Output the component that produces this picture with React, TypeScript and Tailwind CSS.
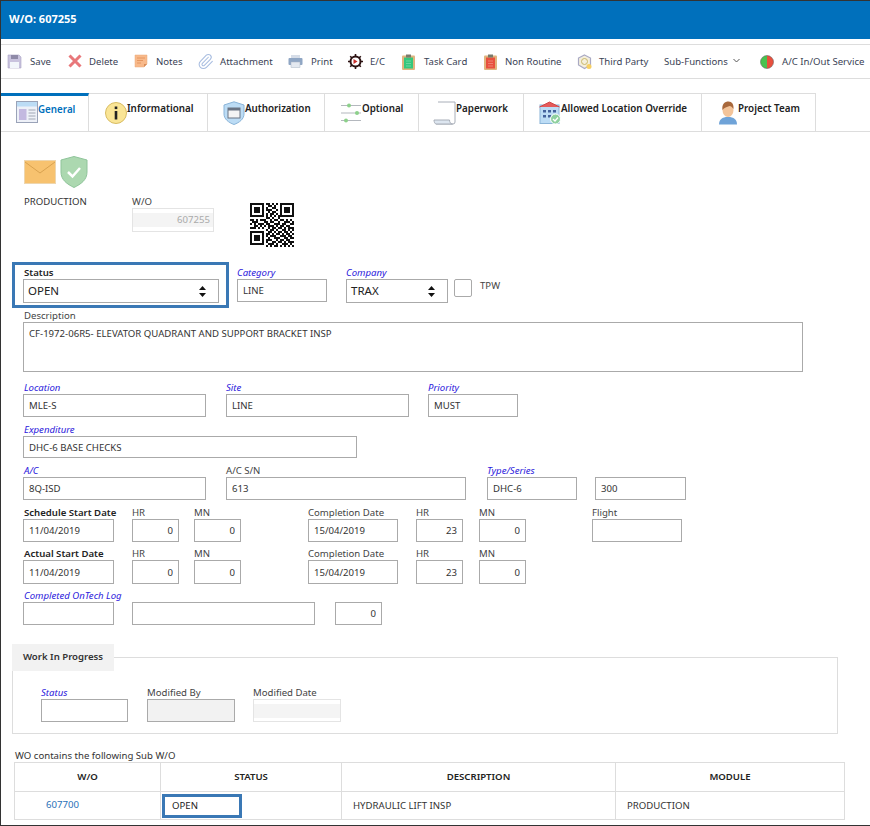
import { Paperclip } from "lucide-react";

const labelBase = "block h-[14px] text-[9.6px] leading-[16px] font-['Noto_Sans',sans-serif] whitespace-nowrap";
const inputBase = "block h-full w-full border border-[#aaa] bg-white px-[5px] text-[9.6px] text-[#333] outline-none font-['Noto_Sans',sans-serif]";

type FieldProps = {
    label?: string;
    value?: string;
    kind?: "plain" | "bold" | "link";
    right?: boolean;
    className: string;
    height?: string;
};

const Field = ({ label, value, kind = "plain", right, className, height = "h-[23px]" }: FieldProps) => {
    const tone =
        kind === "bold"
            ? "font-semibold text-[#222]"
            : kind === "link"
            ? "italic text-[#2b20dc]"
            : "text-[#444]";
    return (
        <div className={`shrink-0 ${className}`}>
            <span className={`${labelBase} ${tone}`}>{label}</span>
            <div className={height}>
                <input readOnly value={value ?? ""} className={`${inputBase} ${right ? "text-right" : ""}`} />
            </div>
        </div>
    );
};

const SelectBox = ({ value }: { value: string }) => (
    <div className="flex h-[24px] items-center justify-between border border-[#aaa] bg-white pl-[4px] pr-[11px] text-[11.5px] text-[#222]">
        <span>{value}</span>
        <svg width="9" height="13" viewBox="0 0 9 13">
            <path d="M4.5 1 8 5H1zM4.5 12 1 8h7z" fill="#111" />
        </svg>
    </div>
);

const DisabledInput = ({ value }: { value?: string }) => (
    <div className="flex h-full items-center border border-[#e4e4e4] bg-white">
        <div className="flex h-[14px] w-full items-center justify-end bg-[#f4f4f4] pr-[3px] text-[9.6px] text-[#aaa]">
            {value}
        </div>
    </div>
);

const Save = () => (
    <svg width="15" height="15" viewBox="0 0 15 15">
        <path d="M1 1h11l2 2v11H1z" fill="#c9c3de" stroke="#a9a3c4" strokeWidth="0.6" />
        <rect x="4" y="1" width="7" height="4" fill="#8f8aa8" />
        <rect x="3" y="8" width="9" height="6" fill="#f2f6fb" />
    </svg>
);
const Delete = () => (
    <svg width="14" height="14" viewBox="0 0 14 14">
        <path d="M1.500 1.500l11 11M12.500 1.500l-11 11" stroke="#e8777a" strokeWidth="3" />
    </svg>
);
const Notes = () => (
    <svg width="14" height="14" viewBox="0 0 14 14">
        <path d="M1 1h12v9l-3 3H1z" fill="#f8b98a" stroke="#e8a878" strokeWidth="0.5" />
        <path d="M3 4h8M3 6.500h6M3 9h4" stroke="#e08d55" strokeWidth="0.8" />
        <path d="M10 13v-3h3z" fill="#d98d5a" />
    </svg>
);
const Printer = () => (
    <svg width="15" height="14" viewBox="0 0 15 14">
        <rect x="3" y="1" width="9" height="4" fill="#d6dde8" />
        <rect x="0.500" y="4" width="14" height="7" rx="1" fill="#8fa6c4" />
        <rect x="3" y="8" width="9" height="5.500" fill="#e4e9f0" stroke="#a8b4c4" strokeWidth="0.5" />
    </svg>
);
const Gear = () => (
    <svg width="15" height="15" viewBox="0 0 15 15">
        <circle cx="7.500" cy="7.500" r="5" fill="none" stroke="#2b1111" strokeWidth="2" />
        <path d="M7.500 0v3M7.500 12v3M0 7.500h3M12 7.500h3M2.200 2.200l2 2M10.800 10.800l2 2M12.800 2.200l-2 2M4.200 10.800l-2 2" stroke="#2b1111" strokeWidth="1.600" />
        <path d="M5.500 5l4 2.500-4 2.500z" fill="#c9302c" />
    </svg>
);
const Board = ({ fill }: { fill: string }) => (
    <svg width="13" height="16" viewBox="0 0 13 16">
        <rect x="0" y="1.500" width="13" height="14.500" rx="1" fill="#e0b47e" />
        <rect x="2" y="3.500" width="9" height="11" fill={fill} />
        <rect x="4" y="0.500" width="5" height="3" fill="#7a7a6a" />
        <path d="M4 7h5M4 9.500h5M4 12h5" stroke="#ffffff" strokeOpacity="0.4" strokeWidth="0.7" />
    </svg>
);
const ThirdParty = () => (
    <svg width="16" height="16" viewBox="0 0 16 16" fill="none">
        <path d="M7.500 1l6 3v7l-6 3.500L1.500 11V4z" fill="#f4efdc" stroke="#a9a9c4" strokeWidth="1.200" />
        <circle cx="7.500" cy="7.500" r="3" stroke="#c9b76a" strokeWidth="1" />
        <circle cx="12" cy="12.500" r="2.500" fill="#f6cf63" />
    </svg>
);
const InOut = () => (
    <svg width="14" height="14" viewBox="0 0 14 14">
        <path d="M7 0.500a6.500 6.500 0 0 0 0 13z" fill="#49c24f" />
        <path d="M7 0.500a6.500 6.500 0 0 1 0 13z" fill="#e8503e" />
        <circle cx="7" cy="7" r="6.500" fill="none" stroke="#555" strokeWidth="0.500" />
    </svg>
);

const toolbar = [
    { icon: <Save />, text: "Save", box: "w-[61px]", iconBox: "w-[23px]" },
    { icon: <Delete />, text: "Delete", box: "w-[66px]", iconBox: "w-[21px]" },
    { icon: <Notes />, text: "Notes", box: "w-[63px]", iconBox: "w-[22px]" },
    { icon: <Paperclip size={17} strokeWidth={1.5} color="#a8bde0" />, text: "Attachment", box: "w-[91px]", iconBox: "w-[23px]" },
    { icon: <Printer />, text: "Print", box: "w-[60px]", iconBox: "w-[23px]" },
    { icon: <Gear />, text: "E/C", box: "w-[54px]", iconBox: "w-[22px]" },
    { icon: <Board fill="#35c77c" />, text: "Task Card", box: "w-[82px]", iconBox: "w-[22px]" },
    { icon: <Board fill="#e8503e" />, text: "Non Routine", box: "w-[93px]", iconBox: "w-[21px]" },
    { icon: <ThirdParty />, text: "Third Party", box: "w-[87px]", iconBox: "w-[22px]" },
];

const TabGeneral = () => (
    <svg width="22" height="22" viewBox="0 0 22 22">
        <rect x="0.500" y="0.500" width="21" height="21" fill="#eef1f8" stroke="#9aa3b8" />
        <rect x="1" y="1" width="20" height="4.500" fill="#bcdcf5" />
        <rect x="3" y="8" width="7.500" height="11" fill="#c3b9e0" />
        <path d="M12.500 9h7M12.500 12h7M12.500 15h7M12.500 18h7" stroke="#a0a6b4" />
    </svg>
);
const TabInfo = () => (
    <svg width="22" height="24" viewBox="0 0 22 24">
        <circle cx="11" cy="12" r="10.500" fill="#fae596" stroke="#d8bc62" />
        <rect x="9.700" y="5.500" width="2.600" height="2.600" fill="#222" />
        <rect x="9.700" y="10" width="2.600" height="8.500" fill="#222" />
    </svg>
);
const TabAuth = () => (
    <svg width="22" height="24" viewBox="0 0 22 24">
        <path d="M11 0.800 21 4v9c0 5-4.500 8.500-10 10.500C5.500 21.500 1 18 1 13V4z" fill="#bcdcf5" stroke="#8ab4d8" />
        <rect x="5" y="7" width="12" height="10" fill="#f4f4f4" stroke="#6a7484" />
        <rect x="5" y="7" width="12" height="2.500" fill="#6a7484" />
    </svg>
);
const TabOptional = () => (
    <svg width="22" height="20" viewBox="0 0 22 20">
        <path d="M1 2.500h20M1 10h20M1 17.500h20" stroke="#b4b8be" strokeWidth="1.200" />
        <circle cx="9" cy="2.500" r="2" fill="#8cd08a" />
        <circle cx="17" cy="10" r="2" fill="#8cd08a" />
        <circle cx="6" cy="17.500" r="2" fill="#8cd08a" />
    </svg>
);
const TabPaper = () => (
    <svg width="23" height="24" viewBox="0 0 23 24" fill="none">
        <path d="M5 1h17v20a2 2 0 0 1-2 2H3" fill="#ffffff" stroke="#a8aeb8" />
        <path d="M1 19h15.500c0 2 1 4 3 4H3c-1 0-2-2-2-4z" fill="#dde6f0" stroke="#a8aeb8" />
    </svg>
);
const TabBuilding = () => (
    <svg width="22" height="24" viewBox="0 0 22 24">
        <rect x="1" y="4" width="19" height="18.500" fill="#bcdcf5" stroke="#8ab4d8" />
        <path d="M0.500 6 10.500 1 20.500 6" fill="#e55b5b" stroke="#d04848" />
        <path d="M4 9h3v2.500H4zM9 9h3v2.500H9zM14 9h3v2.500h-3zM4 14h3v2.500H4zM9 14h3v2.500H9z" fill="#43629c" />
        <circle cx="16.500" cy="18" r="5" fill="#8fd0a0" stroke="#fff" />
        <path d="M14 18l2 2 3-3.500" stroke="#fff" strokeWidth="1.300" fill="none" />
    </svg>
);
const TabPerson = () => (
    <svg width="20" height="24" viewBox="0 0 20 24">
        <path d="M1 23.500c0-5 3-7.500 9-7.500s9 2.500 9 7.500z" fill="#6fa3d8" />
        <ellipse cx="10" cy="9" rx="5.500" ry="7" fill="#f3c49a" />
        <path d="M4.500 9C3.500 3 7 0.500 10.500 0.500S16 3.500 15.500 8C14 6 13 5 11.500 5 9 6 6 6.500 4.500 9z" fill="#a8683c" />
    </svg>
);

const tabs = [
    { icon: <TabGeneral />, text: "General", box: "w-[88px] pl-[15px] pb-[3px]", textBox: "mb-[3px]" },
    { icon: <TabInfo />, text: "Informational", box: "w-[119px] pl-[16px]", textBox: "mb-[6px]" },
    { icon: <TabAuth />, text: "Authorization", box: "w-[117px] pl-[15px]", textBox: "mb-[6px]" },
    { icon: <TabOptional />, text: "Optional", box: "w-[94px] pl-[15px]", textBox: "mb-[6px]" },
    { icon: <TabPaper />, text: "Paperwork", box: "w-[105px] pl-[14px]", textBox: "mb-[6px]" },
    { icon: <TabBuilding />, text: "Allowed Location Override", box: "w-[178px] pl-[15px]", textBox: "mb-[6px]" },
    { icon: <TabPerson />, text: "Project Team", box: "w-[114px] pl-[16px]", textBox: "mb-[6px]" },
];

const QR_ROWS = [
    "1111111011010101111111",
    "1000001001101001000001",
    "1011101010011001011101",
    "1011101011100101011101",
    "1011101001011001011101",
    "1000001010110101000001",
    "1111111010101011111111",
    "0000000011010010000000",
    "1101011100101101101010",
    "0111000110110010011101",
    "1010111011001110110011",
    "0011010101110101101100",
    "1110101001011011010111",
    "0000000010110100110101",
    "1111111001101011011010",
    "1000001011010110101101",
    "1011101010111001110110",
    "1011101001001110011011",
    "1011101011100101101100",
    "1000001010011011010111",
    "1111111001110100111010",
    "0000000010101101010101",
];

const QrCode = () => (
    <svg width="44" height="44" viewBox="0 0 22 22" shapeRendering="crispEdges">
        {QR_ROWS.map((row, y) =>
            row.split("").map((c, x) => (c === "1" ? <rect key={`${x}-${y}`} x={x} y={y} width="1" height="1" fill="#111" /> : null))
        )}
    </svg>
);

const App = () => {
    return (
        <div className="h-[826px] w-[870px] overflow-hidden border-b border-l border-t border-[#333] bg-white font-['Noto_Sans',sans-serif] text-[9.6px] text-[#333]">
            {/* TITLE */}
            <div className="flex h-[38px] items-center bg-[#0070bc] pb-[2px] pl-[8px] text-[11px] font-bold text-white">
                W/O: 607255
            </div>

            {/* TOOLBAR */}
            <div className="mt-[5px] flex h-[35px] items-center border-y border-[#ddd] pl-[6px] text-[9.6px] text-[#3a3f55]">
                {toolbar.map((item) => (
                    <div key={item.text} className={`flex shrink-0 items-center whitespace-nowrap ${item.box}`}>
                        <span className={`flex items-center ${item.iconBox}`}>{item.icon}</span>
                        <span className="mt-px">{item.text}</span>
                    </div>
                ))}
                <span className="mt-px flex w-[96px] shrink-0 items-center whitespace-nowrap">
                    Sub-Functions
                    <svg className="mb-[3px] ml-[5px]" width="7" height="5" viewBox="0 0 7 5" fill="none">
                        <path d="M0.500 1 3.500 4 6.500 1" stroke="#555" />
                    </svg>
                </span>
                <span className="flex w-[22px] shrink-0 items-center">
                    <InOut />
                </span>
                <span className="mt-px whitespace-nowrap">A/C In/Out Service</span>
            </div>

            {/* TABS */}
            <div className="mt-[14px] flex h-[39px] border-b border-[#ddd]">
                {tabs.map((tab, i) => (
                    <div
                        key={tab.text}
                        className={`relative flex shrink-0 items-center border-r border-t border-[#ddd] text-[9.8px] font-semibold whitespace-nowrap ${tab.box} ${
                            i === 0 ? "border-t-[3px] border-t-[#0070bc] text-[#0070bc]" : "text-[#222]"
                        }`}
                    >
                        {tab.icon}
                        <span className={tab.textBox}>{tab.text}</span>
                    </div>
                ))}
            </div>

            {/* GENERAL FORM */}
            <div className="pl-[22px]">
                <div className="ml-px mt-[24px] flex items-center gap-[4px]">
                    <svg width="32" height="24" viewBox="0 0 32 24">
                        <rect x="0.500" y="0.500" width="31" height="23" fill="#f7c26f" stroke="#eed6ae" />
                        <path d="M1 2l15 11L31 2" fill="none" stroke="#d9a24f" />
                    </svg>
                    <svg width="28" height="32" viewBox="0 0 28 32">
                        <path d="M14 0.500 27 4v12c0 8-6 12-13 15.500C7 28 1 24 1 16V4z" fill="#acd8b0" stroke="#8fc49a" />
                        <path d="M8 16l4.500 4.500L20 12" fill="none" stroke="#fff" strokeWidth="2.500" />
                    </svg>
                </div>

                <div className="mt-[6px] flex h-[53px]">
                    <span className="w-[109px] pl-px leading-[16px] text-[#333]">PRODUCTION</span>
                    <div className="w-[82px] shrink-0">
                        <span className={`${labelBase} text-[#444]`}>W/O</span>
                        <div className="h-[24px]">
                            <DisabledInput value="607255" />
                        </div>
                    </div>
                    <div className="ml-[36px] mt-[9px]">
                        <QrCode />
                    </div>
                </div>

                {/* STATUS ROW */}
                <div className="mt-[15px] flex items-start">
                    <div className="-ml-[11px] h-[46px] w-[217px] shrink-0 border-[3px] border-[#3a78b5] pl-[8px] pr-[7px]">
                        <span className={`${labelBase} pl-px font-semibold text-[#222]`}>Status</span>
                        <SelectBox value="OPEN" />
                    </div>
                    <Field label="Category" value="LINE" kind="link" className="ml-[8px] mt-[3px] w-[90px]" />
                    <div className="ml-[19px] mt-[3px] w-[102px] shrink-0">
                        <span className={`${labelBase} italic text-[#2b20dc]`}>Company</span>
                        <SelectBox value="TRAX" />
                    </div>
                    <div className="ml-[6px] mt-[17px] h-[18px] w-[18px] shrink-0 rounded-[2px] border border-[#aaa]" />
                    <span className="ml-[8px] mt-[17px] text-[#444]">TPW</span>
                </div>

                <Field
                    label="Description"
                    value="CF-1972-06R5- ELEVATOR QUADRANT AND SUPPORT BRACKET INSP"
                    className="w-[780px] [&_input]:pb-[28px] [&>span]:pl-px"
                    height="h-[50px]"
                />

                <div className="mt-[8px] flex">
                    <Field label="Location" value="MLE-S" kind="link" className="w-[183px] [&>span]:pl-px" />
                    <Field label="Site" value="LINE" kind="link" className="ml-[20px] w-[183px]" />
                    <Field label="Priority" value="MUST" kind="link" className="ml-[19px] w-[90px]" />
                </div>

                <Field label="Expenditure" value="DHC-6 BASE CHECKS" kind="link" className="mt-[5px] w-[334px] [&>span]:pl-px" height="h-[22px]" />

                <div className="mt-[5px] flex">
                    <Field label="A/C" value="8Q-ISD" kind="link" className="w-[183px] [&>span]:pl-px" />
                    <Field label="A/C S/N" value="613" className="ml-[20px] w-[240px]" />
                    <Field label="Type/Series" value="DHC-6" kind="link" className="ml-[21px] w-[90px]" />
                    <Field value="300" className="ml-[18px] w-[91px]" />
                </div>

                <div className="mt-[5px] flex">
                    <Field label="Schedule Start Date" value="11/04/2019" kind="bold" className="w-[91px] [&>span]:pl-px" />
                    <Field label="HR" value="0" right className="ml-[18px] w-[47px]" />
                    <Field label="MN" value="0" right className="ml-[15px] w-[47px]" />
                    <Field label="Completion Date" value="15/04/2019" className="ml-[67px] w-[90px]" />
                    <Field label="HR" value="23" right className="ml-[18px] w-[47px]" />
                    <Field label="MN" value="0" right className="ml-[16px] w-[47px]" />
                    <Field label="Flight" className="ml-[66px] w-[90px]" />
                </div>

                <div className="mt-[4px] flex">
                    <Field label="Actual Start Date" value="11/04/2019" kind="bold" className="w-[91px] [&>span]:pl-px" height="h-[24px]" />
                    <Field label="HR" value="0" right className="ml-[18px] w-[47px]" height="h-[24px]" />
                    <Field label="MN" value="0" right className="ml-[15px] w-[47px]" height="h-[24px]" />
                    <Field label="Completion Date" value="15/04/2019" className="ml-[67px] w-[90px]" height="h-[24px]" />
                    <Field label="HR" value="23" right className="ml-[18px] w-[47px]" height="h-[24px]" />
                    <Field label="MN" value="0" right className="ml-[16px] w-[47px]" height="h-[24px]" />
                </div>

                <div className="mt-[4px] flex">
                    <Field label="Completed OnTech Log" kind="link" className="w-[91px] [&>span]:pl-px" />
                    <Field className="ml-[18px] w-[183px]" />
                    <Field value="0" right className="ml-[20px] w-[47px]" />
                </div>
            </div>

            {/* WORK IN PROGRESS */}
            <div className="relative ml-[11px] mt-[32px] h-[77px] w-[826px] border border-[#ddd]">
                <div className="absolute -left-px -top-[14px] flex h-[27px] w-[102px] items-center justify-center bg-[#f2f2f2] text-[9.6px] font-semibold text-[#333]">
                    Work In Progress
                </div>
                <div className="mt-[27px] flex pl-[28px]">
                    <Field label="Status" kind="link" className="w-[87px]" />
                    <div className="ml-[19px] w-[88px] shrink-0">
                        <span className={`${labelBase} text-[#444]`}>Modified By</span>
                        <div className="h-[23px] border border-[#aaa] bg-[#f2f2f2]" />
                    </div>
                    <div className="ml-[18px] w-[88px] shrink-0">
                        <span className={`${labelBase} text-[#444]`}>Modified Date</span>
                        <div className="h-[23px]">
                            <DisabledInput />
                        </div>
                    </div>
                </div>
            </div>

            {/* SUB W/O */}
            <p className="ml-[14px] mt-[14px] h-[14px] leading-[16px] text-[#333]">WO contains the following Sub W/O</p>
            <table className="ml-[13px] w-[831px] table-fixed border-collapse text-[9.6px]">
                <thead>
                    <tr className="h-[29px] font-semibold text-[#222]">
                        <th className="w-[146px] border border-[#ddd] pt-px font-semibold">W/O</th>
                        <th className="w-[181px] border border-[#ddd] pt-px font-semibold">STATUS</th>
                        <th className="w-[274px] border border-[#ddd] pt-px font-semibold">DESCRIPTION</th>
                        <th className="border border-[#ddd] pt-px font-semibold">MODULE</th>
                    </tr>
                </thead>
                <tbody>
                    <tr className="h-[28px] text-[#333]">
                        <td className="border border-[#ddd] pl-[31px] text-[#2a70b8]">607700</td>
                        <td className="border border-[#ddd] px-px">
                            <div className="flex h-[24px] w-[80px] items-center border-[3px] border-[#3a78b5] pl-[7px] pt-px text-[#222]">
                                OPEN
                            </div>
                        </td>
                        <td className="border border-[#ddd] pl-[11px] pt-px">HYDRAULIC LIFT INSP</td>
                        <td className="border border-[#ddd] pl-[11px] pt-px">PRODUCTION</td>
                    </tr>
                </tbody>
            </table>
        </div>
    );
};

export default App;
